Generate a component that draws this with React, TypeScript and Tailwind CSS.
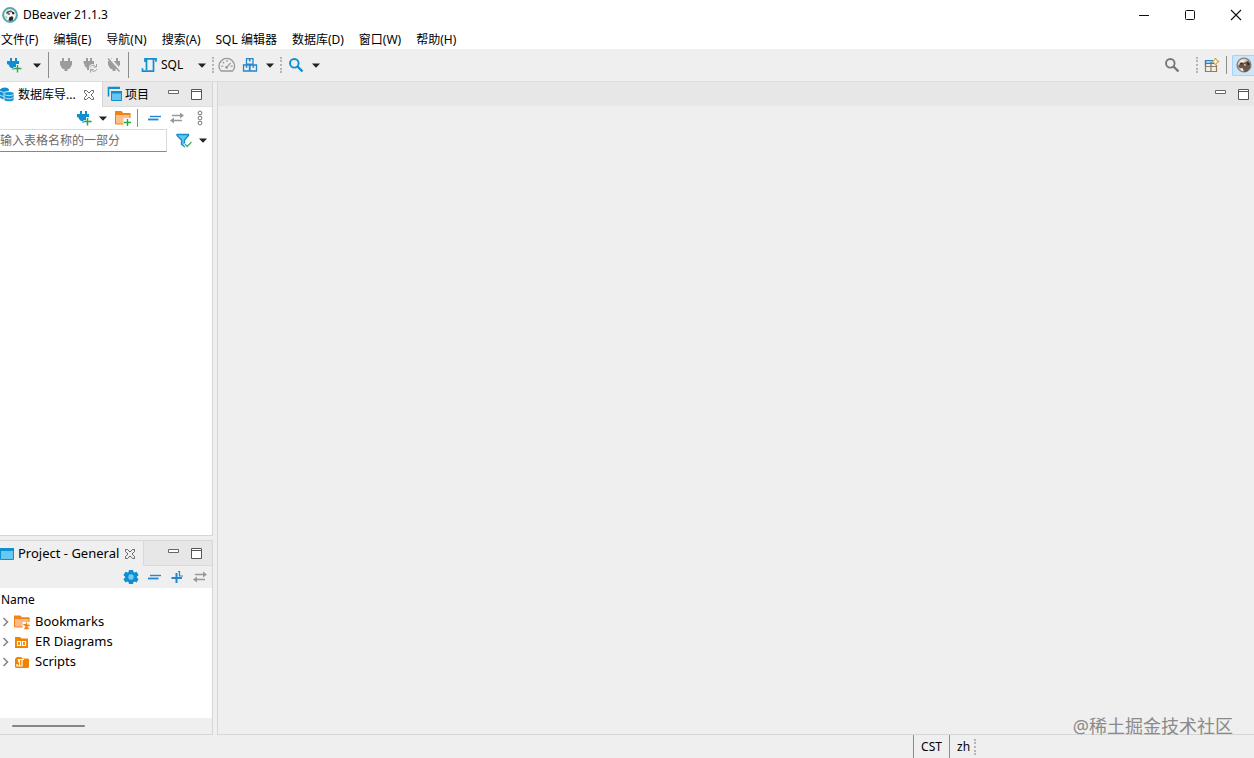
import React from "react";

type IconProps = { className?: string };

const Svg = ({
  children,
  w = 16,
  h = 16,
  className = "",
}: {
  children: React.ReactNode;
  w?: number;
  h?: number;
  className?: string;
}) => (
  <svg
    width={w}
    height={h}
    viewBox={`0 0 ${w} ${h}`}
    fill="none"
    aria-hidden="true"
    className={`block shrink-0 ${className}`}
  >
    {children}
  </svg>
);

const PLUG = "M4 1h2v3h4V1h2v3h2v4l-1 1v1l-2 2H9.500v2h-3v-2H5l-2-2V9L2 8V4h2z";

const LogoIcon = () => (
  <Svg>
    <circle cx="8" cy="8" r="6.900" fill="#f6f6f6" stroke="#4fa9ae" strokeWidth="2" />
    <path d="M4 5.500C5 3.600 8 3 10.500 4l-1 1.500-2-.5L5 7.500z" fill="#6a5a52" />
    <path d="M10 4.600l2.400 1-.2 2-2-.6zM6.400 6.200l1.600.2-.6 1.400-1.400-.2z" fill="#1d1b1b" />
    <path d="M6.500 13.500l.8-3.200 2.400-1.100 1.600.9-.5 3.200-2.300.8z" fill="#2b2625" />
    <path d="M3 9l1.800-.4.6 2.800-1.200.6z" fill="#c9c2bd" />
  </Svg>
);

const PerspectiveFace = () => (
  <Svg>
    <circle cx="8" cy="8" r="6.900" fill="#cfc8c2" stroke="#8b8079" strokeWidth="1.400" />
    <path d="M2 9l3-3 4-.6 3-1.800 2.400 3.400-.4 4-3 3.400-3 .6-1-3-3-.4z" fill="#6b5648" />
    <path d="M3 4.600L6 2.600l3 .4-1 2-3.400.6z" fill="#eeeae6" />
    <path d="M4 6l2-.6.6 1.600-1.600.8zM11 5l2 .8.4 2-1.800.2z" fill="#2a211d" />
    <path d="M4 11.500l2.600-.5.800 2.600-1.400.4zM8.400 7l1.600.4-.6 1.400-1.200-.4z" fill="#f3efec" />
  </Svg>
);

const PlugAdd = () => (
  <Svg>
    <path d="M4 1h2v3h3V1h2v3h2v4h-2v2H9.500v3h-3v-2H5L3 9V8L1 7V4h3z" fill="#0f8fd0" />
    <path d="M11.500 7v8.500M7.500 11.500H16" stroke="#f4f4f4" strokeWidth="3" />
    <path d="M11.500 8v7.500M8 11.500h7.500" stroke="#22a84e" strokeWidth="1.400" />
  </Svg>
);
const PlugGrey = () => (
  <Svg>
    <path d={PLUG} fill="#9c9c9c" />
  </Svg>
);
const PlugSync = () => (
  <Svg>
    <path d="M4 1h2v3h2V1h2v3h2v3H9.500L7 9v4H5v-2L2.500 9V7L1.500 6V4H4z" fill="#9c9c9c" />
    <path d="M8 10.500c1-2.400 3.600-3 5.400-1.200M14.500 7v3h-3M15 12c-1 2.200-3.600 3-5.400 1.200M8.500 15.500v-3h3" stroke="#9c9c9c" />
  </Svg>
);
const PlugOff = () => (
  <Svg>
    <path d={PLUG} fill="#9c9c9c" />
    <path d="M3 1l11.500 13" stroke="#efefef" strokeWidth="3" />
    <path d="M2 1.500l11.500 13" stroke="#9c9c9c" strokeWidth="1.400" />
  </Svg>
);
const ScriptIcon = () => (
  <Svg>
    <path
      d="M4 5V1.800h11v3M5.500 2v11M12.500 2v12.200h-11v-3"
      stroke="#0f8fd0"
      strokeWidth="1.700"
    />
  </Svg>
);
const GaugeIcon = () => (
  <Svg w={18}>
    <path
      d="M3.200 14C1.600 12.600 1 10.800 1 9.200a7.800 7.800 0 0 1 15.600 0c0 1.800-.7 3.500-2.100 4.800z"
      stroke="#999"
      strokeWidth="1.400"
    />
    <path d="M9 3v2M3.200 9.200h2M12.600 9.200h2M4.800 5l1.400 1.400M8.600 10.400l4-4.600" stroke="#999" strokeWidth="1.200" />
    <circle cx="8.600" cy="10.400" r="1.300" fill="#999" />
  </Svg>
);
const BoxesIcon = () => (
  <Svg>
    <path d="M4.500 1.700h6.500v5.500H4.500zM1.500 8h6v6h-6zM8 8h6.500v6H8z" stroke="#2287cd" strokeWidth="1.300" />
    <path d="M7.700 2v2.400M4.500 8.400v2.400M11.300 8.400v2.400" stroke="#2287cd" strokeWidth="1.600" />
  </Svg>
);
const SearchIcon = ({ className = "" }: IconProps) => (
  <Svg className={className}>
    <circle cx="6.300" cy="6.300" r="4.300" stroke="currentColor" strokeWidth="1.900" />
    <path d="M9.500 9.500l5 5" stroke="currentColor" strokeWidth="2.400" />
  </Svg>
);
const Caret = () => (
  <Svg w={8} h={5}>
    <path d="M0 .5h8L4.300 4.500h-.6z" fill="#222" />
  </Svg>
);
const OpenPerspective = () => (
  <Svg>
    <path d="M2 4h7v3H2z" fill="#a6cdf0" />
    <path d="M1.500 3v11.500h11V8M2 9.500h10M7 9v5" stroke="#94804f" strokeWidth="1.200" />
    <path d="M1 3.500h8M1.500 3v6M7 5v4M2 6.500h8" stroke="#2f7fc4" strokeWidth="1.200" />
    <path d="M11.500 1l1.200 2.400 2.500 1.100-2.500 1.200-1.200 2.400-1.200-2.400-2.400-1.200 2.400-1.100z" fill="#fff6cf" stroke="#c9992a" />
  </Svg>
);
const DatabaseIcon = () => (
  <Svg w={15}>
    <path d="M0 2.500C2-.2 8-.2 9 2.500v8C7 13 2 13 0 10.500z" fill="#0f8fd0" />
    <path d="M0 4c2 1.800 7 1.800 9 0M0 8c2 1.600 5 1.600 6 1" stroke="#b9e4f7" />
    <path d="M4 6.500c0-2.600 10-2.600 10 0v6c0 3-10 3-10 0z" fill="#1495d6" stroke="#fff" strokeWidth=".8" />
    <path d="M4.500 7.500c1.800 1.600 7.200 1.600 9 0M4.500 10.500c1.800 1.800 7.200 1.800 9 0" stroke="#b9e4f7" />
  </Svg>
);
const ProjectsIcon = () => (
  <Svg>
    <path d="M1.500 10.500v-9h11" stroke="#0f8fd0" strokeWidth="1.600" />
    <path d="M1 1h12v2H1z" fill="#0f8fd0" />
    <path d="M4.500 5.500h10v9h-10z" fill="#67c5ef" stroke="#0f8fd0" />
    <path d="M4 5h11v2.500H4z" fill="#0f8fd0" />
  </Svg>
);
const ProjectIcon = () => (
  <Svg w={14}>
    <path d="M.5 2.500h13v11H.5z" fill="#67c8f2" stroke="#0f8fd0" />
    <path d="M0 2h14v3H0z" fill="#0f8fd0" />
  </Svg>
);
const CloseX = () => (
  <Svg w={12} h={12}>
    <path d="M1.500 1.500h2L6 4l2.500-2.500h2v2L8 6l2.500 2.500v2h-2L6 8l-2.500 2.500h-2v-2L4 6 1.500 3.500z" stroke="#666" />
  </Svg>
);
const MinIcon = () => (
  <Svg w={11} h={11}>
    <path d="M.5 1.500h10v3H.5z" fill="#fff" stroke="#666" />
  </Svg>
);
const MaxIcon = () => (
  <Svg w={11} h={11}>
    <path d="M.5.5h10v10H.5zM.5 2.500h10" fill="#fff" stroke="#555" />
  </Svg>
);
const FolderAdd = () => (
  <Svg>
    <path d="M.5 14V2.500H6L7.500 4H15v10z" fill="#fabf8b" stroke="#f08314" />
    <path d="M0 1h6.500L8 3h7.500v2H0z" fill="#f08314" />
    <path d="M8.500 8H16v8H8.500z" fill="#fff" />
    <path d="M12.500 9v7M9 12.500h7" stroke="#22a84e" strokeWidth="1.400" />
  </Svg>
);
const CollapseIcon = () => (
  <Svg>
    <path d="M4 6.500h11" stroke="#2287cd" strokeWidth="1.400" />
    <path d="M2 9.500h10.500" stroke="#2287cd" strokeWidth="1.800" />
  </Svg>
);
const ExpandIcon = () => (
  <Svg>
    <path d="M2.500 9h10.500M7.500 4v10" stroke="#2287cd" strokeWidth="2" />
    <path d="M9 2.500h1.500v4.500H14" stroke="#2287cd" strokeWidth="1.200" />
  </Svg>
);
const LinkIcon = () => (
  <Svg>
    <path d="M3 5.500h8M5 10.500h8" stroke="#999" strokeWidth="1.700" />
    <path d="M11 2.500l4 3-4 3zM5 7.500l-4 3 4 3z" fill="#999" />
  </Svg>
);
const DotsIcon = () => (
  <Svg w={6}>
    <circle cx="3" cy="3" r="1.900" stroke="#777" />
    <circle cx="3" cy="8" r="1.900" stroke="#777" />
    <circle cx="3" cy="13" r="1.900" stroke="#777" />
  </Svg>
);
const FilterIcon = () => (
  <Svg>
    <path d="M1 1.500h11.500v1L8.500 7v6.500l-3-2V7L1 2.500z" fill="#62c4ef" stroke="#0f8fd0" strokeWidth="1.300" />
    <path d="M8.500 10.500l2.500 3 4.500-4.500" stroke="#fff" strokeWidth="3" />
    <path d="M9 11l2.200 2.500 4.300-4.500" stroke="#3cae62" strokeWidth="1.200" />
  </Svg>
);
const GearIcon = () => (
  <Svg>
    <path
      d="M6 1h4l.4 2 1.200.6 2-.8 2 3.400L14 7.500v1.200l1.600 1.300-2 3.400-2-.8-1.200.7L10 15H6l-.4-1.700-1.200-.7-2 .8-2-3.400L2 8.700V7.500L.4 6.200l2-3.400 2 .8L5.600 3z"
      fill="#0f8fd0"
    />
    <circle cx="8" cy="8" r="2.700" fill="#76cbee" />
  </Svg>
);
const BookmarkFolder = () => (
  <Svg>
    <path d="M.5 13V2.500H6L7.500 4H15v9z" fill="#fab98a" stroke="#f08314" />
    <path d="M0 1.500h6.500L8 3.500h7.500V5H0z" fill="#f08314" />
    <path d="M8.500 8H16v8H8.500z" fill="#fff" />
    <path d="M12.500 8.500v7M9.300 10.500l6.400 1M10.500 15l4-4.500M14.500 15l-4-4.500" stroke="#f08314" strokeWidth="1.300" />
  </Svg>
);
const DiagramFolder = () => (
  <Svg>
    <path d="M1 14V3h5l1.500 1.500H14V14z" fill="#f08300" />
    <path d="M3.500 7.500h3v4h-3zM8.500 7.500h3v4h-3z" stroke="#fff" strokeWidth="1.200" />
  </Svg>
);
const ScriptFolder = () => (
  <Svg>
    <path d="M1 13V5l2-2h4l1.500 1.500H14l1 1V13l-1 1H2z" fill="#f08300" />
    <path d="M4.500 8V5.500H10M5.500 6v5.500M8 6v6H3v-2" stroke="#fff" strokeWidth="1.200" />
  </Svg>
);

const Tool = ({
  label,
  className = "",
  children,
}: {
  label: string;
  className?: string;
  children: React.ReactNode;
}) => (
  <button type="button" aria-label={label} className={`flex shrink-0 items-center justify-center ${className}`}>
    {children}
  </button>
);

const Rule = ({ className = "" }: IconProps) => <div className={`w-px shrink-0 bg-[#8b8b8b] ${className}`} />;
const Grip = ({ className = "" }: IconProps) => (
  <div className={`h-4 w-0 shrink-0 border-l-2 border-dotted border-[#b4b4b4] ${className}`} />
);

const MENUS = ["文件(F)", "编辑(E)", "导航(N)", "搜索(A)", "SQL 编辑器", "数据库(D)", "窗口(W)", "帮助(H)"];

const TREE = [
  { name: "Bookmarks", icon: <BookmarkFolder /> },
  { name: "ER Diagrams", icon: <DiagramFolder /> },
  { name: "Scripts", icon: <ScriptFolder /> },
];

const PaneButtons = ({ className = "pr-2.5" }: IconProps) => (
  <div className={`ml-auto flex items-center gap-3 ${className}`}>
    <Tool label="最小化视图">
      <MinIcon />
    </Tool>
    <Tool label="最大化视图">
      <MaxIcon />
    </Tool>
  </div>
);

export default function App() {
  return (
    <div className="flex h-screen flex-col overflow-hidden bg-[#efefef] font-['Noto_Sans','Noto_Sans_CJK_SC',sans-serif] text-xs text-black">
      <header className="bg-white">
        <div className="flex h-[29px] items-center pl-0.5">
          <LogoIcon />
          <h1 className="ml-[5px]">DBeaver 21.1.3</h1>
          <div className="ml-auto flex items-center gap-[34px] pr-3">
            <Tool label="最小化">
              <Svg w={12} h={12}>
                <path d="M1 6.500h10" stroke="#111" />
              </Svg>
            </Tool>
            <Tool label="最大化">
              <Svg w={12} h={12}>
                <rect x="1.500" y="1.500" width="9" height="9" rx="1" stroke="#111" />
              </Svg>
            </Tool>
            <Tool label="关闭">
              <Svg w={12} h={12}>
                <path d="M1 1l10 10M11 1L1 11" stroke="#111" strokeWidth="1.100" />
              </Svg>
            </Tool>
          </div>
        </div>
        <nav className="flex h-5 items-end gap-[15px] pl-px">
          {MENUS.map((m) => (
            <button key={m} type="button" className="whitespace-nowrap leading-[18px]">
              {m}
            </button>
          ))}
        </nav>
      </header>

      <div
        role="toolbar"
        className="flex h-[33px] shrink-0 items-center border-b border-[#dcdcdc] pl-1.5"
      >
        <Tool label="新建连接"><PlugAdd /></Tool>
        <Tool label="新建连接选项" className="ml-[11px]"><Caret /></Tool>
        <Rule className="ml-[7px] h-[26px]" />
        <Tool label="连接" className="ml-[9px]"><PlugGrey /></Tool>
        <Tool label="重新连接" className="ml-2"><PlugSync /></Tool>
        <Tool label="断开连接" className="ml-2"><PlugOff /></Tool>
        <Rule className="ml-1.5 h-[26px]" />
        <button type="button" className="ml-3 flex w-[57px] items-center gap-1">
          <ScriptIcon />
          SQL
        </button>
        <Tool label="SQL 选项"><Caret /></Tool>
        <Grip className="ml-1.5" />
        <Tool label="仪表板" className="ml-1"><GaugeIcon /></Tool>
        <Tool label="事务" className="ml-1.5"><BoxesIcon /></Tool>
        <Tool label="事务选项" className="ml-2"><Caret /></Tool>
        <Grip className="ml-1.5" />
        <Tool label="搜索" className="ml-1.5"><SearchIcon className="text-[#0f8fd0]" /></Tool>
        <Tool label="搜索选项" className="ml-2"><Caret /></Tool>

        <Tool label="快速访问" className="ml-auto">
          <SearchIcon className="text-[#777]" />
        </Tool>
        <Grip className="ml-4" />
        <Tool label="打开透视图" className="ml-1.5"><OpenPerspective /></Tool>
        <Rule className="ml-1.5 h-[18px]" />
        <Tool
          label="DBeaver 透视图"
          className="ml-[5px] h-[21px] w-[22px] rounded-l-xs border border-r-0 border-[#a5d3f5] bg-[#cce6fb]"
        >
          <PerspectiveFace />
        </Tool>
      </div>

      <div className="flex min-h-0 flex-1">
        <aside className="flex w-[213px] shrink-0 flex-col gap-1">
          <section className="flex min-h-0 flex-1 flex-col border-r border-b border-[#d6d6d6] bg-white">
            <div className="flex h-[25px] shrink-0 border-b border-[#dedede] bg-[#e9e9e9]">
              <div role="tab" className="-mb-px flex w-[103px] items-center border-r border-[#d6d6d6] bg-white">
                <DatabaseIcon />
                <span className="ml-[3px] w-[58px] pt-px whitespace-nowrap">数据库导...</span>
                <Tool label="关闭" className="ml-[7px]"><CloseX /></Tool>
              </div>
              <div role="tab" className="flex items-center gap-0.5 pl-1">
                <ProjectsIcon />
                <span className="pt-px">项目</span>
              </div>
              <PaneButtons />
            </div>
            <div role="toolbar" className="flex h-[22px] shrink-0 items-center justify-end pr-[9px]">
              <Tool label="新建连接"><PlugAdd /></Tool>
              <Tool label="新建连接选项" className="ml-[7px]"><Caret /></Tool>
              <Tool label="新建文件夹" className="ml-2"><FolderAdd /></Tool>
              <Rule className="ml-1.5 h-[18px]" />
              <Tool label="全部折叠" className="ml-2"><CollapseIcon /></Tool>
              <Tool label="与编辑器链接" className="ml-[7px]"><LinkIcon /></Tool>
              <Tool label="视图菜单" className="ml-3"><DotsIcon /></Tool>
            </div>
            <div className="flex h-[23px] shrink-0 items-center">
              <input
                type="text"
                aria-label="过滤表格"
                placeholder="输入表格名称的一部分"
                className="h-full w-[167px] border border-l-0 border-[#dadada] border-b-[#888] bg-white p-0 text-xs outline-none placeholder:text-[#6b6b6b]"
              />
              <Tool label="过滤" className="ml-[9px]"><FilterIcon /></Tool>
              <Tool label="过滤选项" className="ml-[7px]"><Caret /></Tool>
            </div>
          </section>

          <section className="flex h-[195px] shrink-0 flex-col border-t border-r border-b border-[#d6d6d6]">
            <div className="flex h-[25px] shrink-0">
              <div role="tab" className="flex w-[143px] items-center">
                <ProjectIcon />
                <span className="ml-1 w-[99px] pt-px text-[13px] whitespace-nowrap">Project - General</span>
                <Tool label="关闭" className="ml-[7px]"><CloseX /></Tool>
              </div>
              <div className="flex flex-1 border-b border-l border-[#dadada] bg-[#e7e7e7]">
                <PaneButtons />
              </div>
            </div>
            <div role="toolbar" className="flex h-[22px] shrink-0 items-center justify-end gap-[7px] pr-1">
              <Tool label="配置"><GearIcon /></Tool>
              <Tool label="全部折叠"><CollapseIcon /></Tool>
              <Tool label="全部展开"><ExpandIcon /></Tool>
              <Tool label="与编辑器链接"><LinkIcon /></Tool>
            </div>
            <div className="min-h-0 flex-1 bg-white">
              <div className="flex h-6 items-center pl-px">Name</div>
              <ul>
                {TREE.map((t) => (
                  <li key={t.name} className="flex h-5 items-center pl-0.5 text-[13px]">
                    <Svg w={8} h={10}>
                      <path d="M1.500 1l4 4-4 4" stroke="#888" strokeWidth="1.600" />
                    </Svg>
                    <span className="ml-1">{t.icon}</span>
                    <span className="ml-[5px]">{t.name}</span>
                  </li>
                ))}
              </ul>
            </div>
            <div className="flex h-4 shrink-0 items-center pl-3">
              <div className="h-0.5 w-[73px] rounded-full bg-[#868686]" />
            </div>
          </section>
        </aside>

        <main className="relative ml-1 flex flex-1 flex-col border-b border-l border-[#d6d6d6]">
          <div className="flex h-6 items-center bg-[#e7e7e7]">
            <PaneButtons className="pr-[5px]" />
          </div>
          <p className="absolute right-[21px] -bottom-1.5 text-lg leading-7 whitespace-nowrap text-[#8a8a8a]">
            @稀土掘金技术社区
          </p>
        </main>
      </div>

      <footer className="flex h-[23px] shrink-0 items-center justify-end">
        <Rule className="h-full" />
        <span className="w-[35px] text-center">CST</span>
        <Rule className="h-full" />
        <span className="ml-[7px] w-[17px]">zh</span>
        <Grip className="mr-[278px]" />
      </footer>
    </div>
  );
}
